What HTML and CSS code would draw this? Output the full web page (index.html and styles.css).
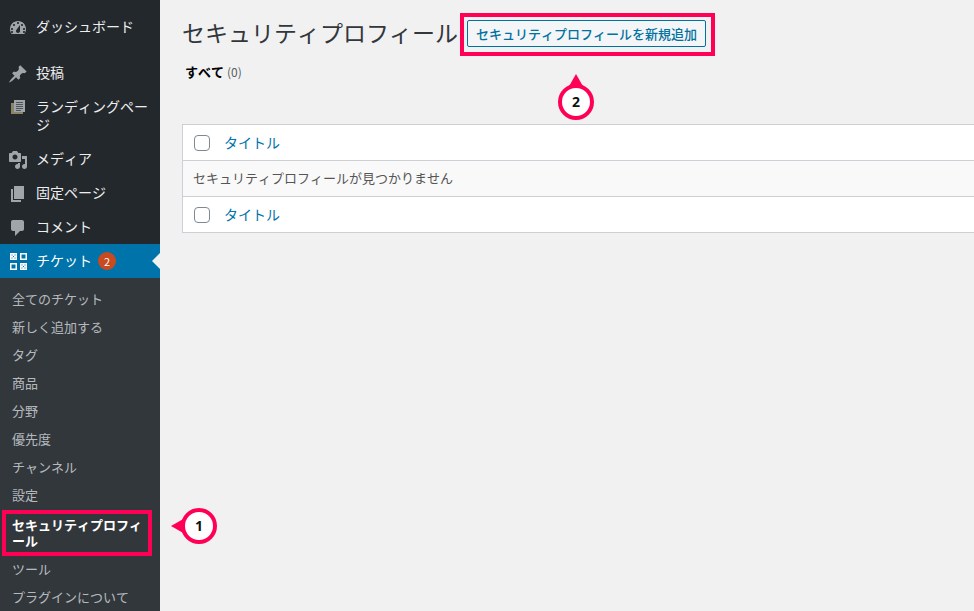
FILE: index.html
```html
<!DOCTYPE html>
<html lang="ja">
<head>
<meta charset="utf-8">
<title>セキュリティプロフィール</title>
<link rel="stylesheet" href="styles.css">
</head>
<body>
<div class="layout">
  <nav class="side">
    <a class="item first"><svg class="ic" viewBox="0 0 20 20"><path d="M3.760 16h12.480c1.100-1.370 1.760-3.110 1.760-5 0-4.420-3.580-8-8-8s-8 3.580-8 8c0 1.890.66 3.630 1.760 5zM10 4c.55 0 1 .45 1 1s-.45 1-1 1-1-.45-1-1 .45-1 1-1zM6 6c.55 0 1 .45 1 1s-.45 1-1 1-1-.45-1-1 .45-1 1-1zm8 0c.55 0 1 .45 1 1s-.45 1-1 1-1-.45-1-1 .45-1 1-1zm-5.370 5.550L12 7v6c0 1.100-.9 2-2 2s-2-.9-2-2c0-.57.24-1.080.63-1.450zM4 10c.55 0 1 .45 1 1s-.45 1-1 1-1-.45-1-1 .45-1 1-1zm12 0c.55 0 1 .45 1 1s-.45 1-1 1-1-.45-1-1 .45-1 1-1zm-12 3c.55 0 1 .45 1 1s-.45 1-1 1-1-.45-1-1 .45-1 1-1zm12 0c.55 0 1 .45 1 1s-.45 1-1 1-1-.45-1-1 .45-1 1-1z" fill-rule="evenodd"/></svg><span>ダッシュボード</span></a>
    <a class="item gap"><svg class="ic" viewBox="0 0 20 20"><path d="M10.440 3.020l1.820-1.820 6.360 6.350-1.830 1.820c-1.050-.68-2.480-.57-3.410.36l-.75.75c-.92.93-1.040 2.350-.35 3.410l-1.830 1.820-2.410-2.410-2.800 2.790c-.42.42-3.380 2.710-3.800 2.290s1.860-3.390 2.280-3.810l2.790-2.790L4.100 9.360l1.830-1.820c1.050.69 2.480.57 3.400-.36l.75-.75c.93-.92 1.040-2.350.36-3.410z"/></svg><span>投稿</span></a>
    <a class="item"><svg class="ic" viewBox="0 0 20 20"><path class="ic-back" d="M3 5h12v11H3z"/><path class="ic-sheet" d="M6 2h11v12H6z"/><path class="ic-lines" d="M8 4h7v1H8zM8 6h7v1H8zM8 8h7v1H8zM8 10h7v1H8zM8 12h5v1H8z"/></svg><span>ランディングページ</span></a>
    <a class="item"><svg class="ic" viewBox="0 0 20 20"><path fill-rule="evenodd" d="M13 11V4c0-.55-.45-1-1-1h-1.670L9 1H5L3.670 3H2c-.55 0-1 .45-1 1v7c0 .55.45 1 1 1h10c.55 0 1-.45 1-1zM7 4.500c1.380 0 2.500 1.120 2.500 2.500S8.380 9.500 7 9.500 4.500 8.380 4.500 7 5.620 4.500 7 4.500zM14 6h5v10.500c0 1.380-1.120 2.500-2.500 2.500S14 17.880 14 16.500s1.120-2.500 2.500-2.500c.17 0 .34.020.5.050V9h-3V6zm-4 8.050V13h2v3.500c0 1.380-1.120 2.500-2.500 2.500S7 17.880 7 16.500 8.120 14 9.500 14c.17 0 .34.020.5.050z"/></svg><span>メディア</span></a>
    <a class="item"><svg class="ic" viewBox="0 0 20 20"><path d="M6 15V2h10v13H6zm-1 1h8v2H3V5h2v11z"/></svg><span>固定ページ</span></a>
    <a class="item"><svg class="ic" viewBox="0 0 20 20"><path d="M5 2h9c1.100 0 2 .9 2 2v7c0 1.100-.9 2-2 2h-2l-5 5v-5H5c-1.100 0-2-.9-2-2V4c0-1.100.9-2 2-2z"/></svg><span>コメント</span></a>
    <a class="item current"><svg class="ic" viewBox="0 0 20 20"><path fill-rule="evenodd" d="M2 1h7v7H2zM3.500 2.500v1h1v-1zM6.500 2.500v1h1v-1zM5 4v1h1V4zM3.500 5.500v1h1v-1zM6.500 5.500v1h1v-1zM12 1h7v7h-7zM13.500 2.500v4h4v-4zM2 11h7v7H2zM3.500 12.500v4h4v-4zM12 11h7v7h-7zM13.500 12.500v1h1v-1zM16.500 12.500v1h1v-1zM15 14v1h1v-1zM13.500 15.500v1h1v-1zM16.500 15.500v1h1v-1z"/></svg><span>チケット</span><b class="count">2</b></a>
    <ul class="sub">
      <li>全てのチケット</li>
      <li>新しく追加する</li>
      <li>タグ</li>
      <li>商品</li>
      <li>分野</li>
      <li>優先度</li>
      <li>チャンネル</li>
      <li>設定</li>
      <li class="on">セキュリティプロフィール</li>
      <li>ツール</li>
      <li>プラグインについて</li>
    </ul>
  </nav>
  <main class="main">
    <div class="head">
      <h1 class="title">セキュリティプロフィール</h1>
      <a class="add">セキュリティプロフィールを新規追加</a>
    </div>
    <p class="views"><b>すべて</b> <span>(0)</span></p>
    <div class="table">
      <div class="row"><i class="check"></i><a>タイトル</a></div>
      <div class="row empty">セキュリティプロフィールが見つかりません</div>
      <div class="row"><i class="check"></i><a>タイトル</a></div>
    </div>
  </main>
</div>
<div class="mark box-one"></div>
<div class="mark box-two"></div>
<div class="pin pin-one"><span>1</span></div>
<div class="pin pin-two"><span>2</span></div>
</body>
</html>
```
FILE: styles.css
```css
* { box-sizing: border-box; }
html, body { margin: 0; height: 611px; overflow: hidden; }
body {
  position: relative;
  background: #f1f1f1;
  color: #444;
  font: 13px/1.4 "Noto Sans CJK JP", "Noto Sans", sans-serif;
  font-kerning: none;
}
.layout { display: flex; height: 611px; }
.side {
  flex: 0 0 160px;
  background: #23282d;
  padding-top: 10px;
  color: #eee;
  font-size: 14px;
}
.item {
  display: flex;
  align-items: flex-start;
  gap: 8px;
  padding: 8px;
  line-height: 18px;
  color: #eee;
}
.item span { margin-top: -1px; margin-bottom: 1px; }
.item.gap { margin-top: 12px; }
.ic { flex: 0 0 20px; width: 20px; height: 20px; fill: #a0a5aa; margin-bottom: -2px; }
.ic-back { fill: #8a8468; }
.ic-sheet { fill: #a0a5aa; }
.ic-lines { fill: #50555a; }
.current { background: #0073aa; color: #fff; position: relative; }
.current .ic { fill: #fff; }
.current::after {
  content: "";
  position: absolute;
  right: 0;
  top: 50%;
  margin-top: -8px;
  border: 8px solid transparent;
  border-right-color: #f1f1f1;
}
.count {
  margin-left: -2px;
  width: 18px;
  height: 18px;
  border-radius: 50%;
  background: #ca4a1f;
  color: #fff;
  font-size: 11px;
  font-weight: 400;
  line-height: 18px;
  text-align: center;
}
.sub {
  list-style: none;
  margin: 0;
  padding: 7px 0 0;
  background: #32373c;
  height: 333px;
}
.sub li {
  padding: 6px 12px;
  font-size: 13px;
  line-height: 16px;
  color: rgba(240, 245, 250, .7);
}
.sub li.on { color: #fff; font-weight: 700; padding-top: 8px; padding-bottom: 6px; }
.main { flex: 1 1 auto; min-width: 0; padding-left: 22px; }
.head { display: flex; align-items: center; height: 47px; margin-top: 10px; }
.title { margin: 0 0 4px; font-size: 23px; font-weight: 400; line-height: 32px; color: #32373c; white-space: nowrap; }
.add {
  margin-left: 9px;
  height: 27px;
  padding: 0 8px;
  border: 1px solid #0071a1;
  border-radius: 2px;
  background: #f3f5f6;
  color: #0071a1;
  font-weight: 500;
  font-size: 13px;
  line-height: 25px;
  white-space: nowrap;
}
.views { margin: 5px 0 0 3px; font-size: 13px; line-height: 20px; color: #000; }
.views b { font-weight: 700; }
.views span { color: #555d66; font-size: 12px; }
.table {
  margin-top: 42px;
  margin-right: -4px;
  border: 1px solid #ccd0d4;
  background: #fff;
}
.row {
  display: flex;
  align-items: center;
  height: 36px;
  padding-left: 11px;
  font-size: 14px;
  color: #0073aa;
}
.row:first-child { height: 35px; }
.row + .row { border-top: 1px solid #ccd0d4; }
.row a { margin-left: 14px; }
.check {
  width: 16px;
  height: 16px;
  border: 1px solid #7e8993;
  border-radius: 4px;
  background: #fff;
}
.empty { background: #f9f9f9; font-size: 13px; color: #555; padding-left: 10px; }
.mark { position: absolute; border: 4px solid #ff0055; }
.box-one { left: 2px; top: 510px; width: 150px; height: 46px; }
.box-two { left: 460px; top: 13px; width: 255px; height: 43px; }
.pin {
  position: absolute;
  width: 36px;
  height: 36px;
  border: 4px solid #ff0055;
  border-radius: 50%;
  background: #fff;
  color: #111;
  font: 700 14px/28px "Open Sans", sans-serif;
  text-align: center;
}
.pin::before { content: ""; position: absolute; border: 8px solid transparent; }
.pin-one { left: 181px; top: 508px; }
.pin-one::before { left: -14px; top: 6px; border-right: 14px solid #ff0055; border-left: 0; }
.pin-two { left: 558px; top: 84px; }
.pin-two::before { left: 6px; top: -14px; border-bottom: 14px solid #ff0055; border-top: 0; }
```
